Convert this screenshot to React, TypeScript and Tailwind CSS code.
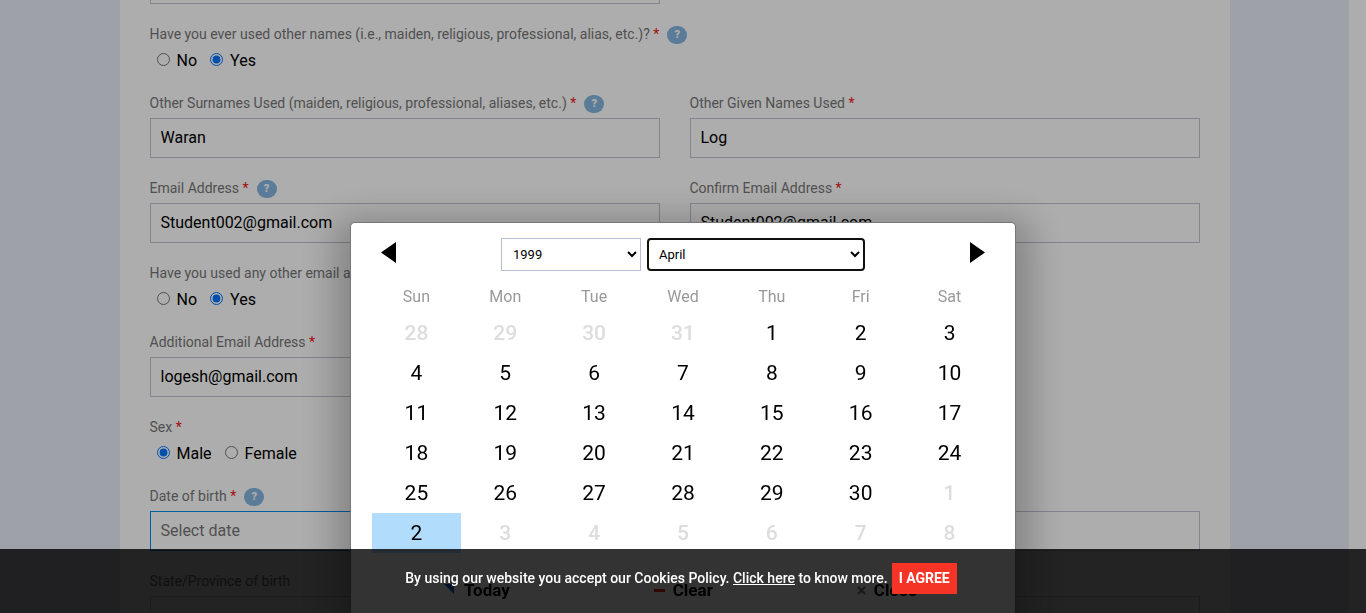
import { useState, type ReactNode } from 'react';

const YEARS = ['1997', '1998', '1999', '2000', '2001'];
const MONTHS = ['January', 'February', 'March', 'April', 'May', 'June', 'July', 'August', 'September', 'October', 'November', 'December'];
const WEEKDAYS = ['Sun', 'Mon', 'Tue', 'Wed', 'Thu', 'Fri', 'Sat'];

type Day = { n: number; outside: boolean; picked?: boolean };

const DAYS: Day[] = [
  ...[28, 29, 30, 31].map((n) => ({ n, outside: true })),
  ...Array.from({ length: 30 }, (_, i) => ({ n: i + 1, outside: false })),
  { n: 1, outside: true },
  { n: 2, outside: false, picked: true },
  ...[3, 4, 5, 6, 7, 8].map((n) => ({ n, outside: true })),
];

const WEEKS = Array.from({ length: 6 }, (_, w) => DAYS.slice(w * 7, w * 7 + 7));

function Help() {
  return (
    <button
      type="button"
      aria-label="Help"
      className="mt-px ml-2 flex h-[18px] w-5 items-center justify-center rounded-full bg-[#86b7e0] text-[11px] leading-none font-black text-white"
    >
      ?
    </button>
  );
}

function Star() {
  return <span className="text-[#f51414]"> *</span>;
}

type FieldProps = {
  id: string;
  label: string;
  value?: string;
  placeholder?: string;
  required?: boolean;
  help?: boolean;
  active?: boolean;
};

function Field({ id, label, value, placeholder, required, help, active }: FieldProps) {
  return (
    <div>
      <div className="flex h-5 items-center text-sm leading-5 whitespace-nowrap text-[#777]">
        <label htmlFor={id}>
          {label}
          {required && <Star />}
        </label>
        {help && <Help />}
      </div>
      <input
        id={id}
        type="text"
        defaultValue={value}
        placeholder={placeholder}
        className={`mt-[5px] block h-10 w-full border bg-white px-2.5 pb-0.5 text-base text-black placeholder:text-[#777] ${
          active ? 'border-[#0089ec]' : 'border-[#c1c4d0]'
        }`}
      />
    </div>
  );
}

type ChoiceProps = { name: string; label: string; options: string[]; chosen: string; help?: boolean };

function Choice({ name, label, options, chosen, help }: ChoiceProps) {
  return (
    <fieldset>
      <legend className="flex h-5 items-center text-sm leading-5 whitespace-nowrap text-[#777]">
        <span>
          {label}
          <Star />
        </span>
        {help && <Help />}
      </legend>
      <div className="mt-[5px] flex h-6 items-center gap-[13px] pl-[7px]">
        {options.map((option) => (
          <label key={option} className="flex items-center gap-[7px] text-base leading-6 text-black">
            <input type="radio" name={name} defaultChecked={option === chosen} className="mb-1 h-[13px] w-[13px]" />
            {option}
          </label>
        ))}
      </div>
    </fieldset>
  );
}

function Row({ children }: { children: ReactNode }) {
  return <div className="grid grid-cols-2 gap-[30px]">{children}</div>;
}

function Form() {
  return (
    <form className="mx-auto -mt-9 flex max-w-[1110px] flex-col gap-5 bg-white px-[30px] pb-5">
      <Row>
        <input type="text" aria-label="Surname" className="block h-10 w-full border border-[#c1c4d0] bg-white px-2.5" />
      </Row>
      <Choice
        name="other-names"
        label="Have you ever used other names (i.e., maiden, religious, professional, alias, etc.)?"
        options={['No', 'Yes']}
        chosen="Yes"
        help
      />
      <Row>
        <Field id="other-surnames" label="Other Surnames Used (maiden, religious, professional, aliases, etc.)" value="Waran" required help />
        <Field id="other-given" label="Other Given Names Used" value="Log" required />
      </Row>
      <Row>
        <Field id="email" label="Email Address" value="Student002@gmail.com" required help />
        <Field id="confirm-email" label="Confirm Email Address" value="Student002@gmail.com" required />
      </Row>
      <Choice name="other-email" label="Have you used any other email address?" options={['No', 'Yes']} chosen="Yes" />
      <Row>
        <Field id="additional-email" label="Additional Email Address" value="logesh@gmail.com" required />
      </Row>
      <Choice name="sex" label="Sex" options={['Male', 'Female']} chosen="Male" />
      <Row>
        <Field id="birth-date" label="Date of birth" placeholder="Select date" required help active />
        <Field id="birth-city" label="City of birth" />
      </Row>
      <Row>
        <Field id="birth-state" label="State/Province of birth" />
        <Field id="birth-country" label="Country of birth" />
      </Row>
    </form>
  );
}

function DatePicker() {
  const [year, setYear] = useState('1999');
  const [month, setMonth] = useState('April');

  return (
    <div className="fixed inset-0 flex items-end justify-center bg-black/[0.32]">
      <div
        role="dialog"
        aria-label="Choose a date"
        className="w-full max-w-[666px] rounded-t-[5px] border border-b-0 border-[#777] bg-white px-[21px] pt-[15px] shadow-[0_12px_36px_16px_rgba(0,0,0,0.24)]"
      >
        <div className="flex items-start justify-between px-[9px]">
          <button type="button" aria-label="Previous month" className="flex h-[29px] items-center">
            <svg width="15" height="21" viewBox="0 0 15 21">
              <path d="M15 0v21L0 10.5z" />
            </svg>
          </button>
          <div className="flex gap-1.5">
            <select
              aria-label="Year"
              value={year}
              onChange={(e) => setYear(e.target.value)}
              className="h-[33px] w-[140px] border border-[#b7c0d6] bg-white pl-[7px] text-[13px] text-black"
            >
              {YEARS.map((y) => (
                <option key={y}>{y}</option>
              ))}
            </select>
            <select
              aria-label="Month"
              value={month}
              onChange={(e) => setMonth(e.target.value)}
              className="h-[33px] w-[218px] rounded-[4px] border-2 border-[#101010] bg-white pl-1.5 text-[13px] text-black"
            >
              {MONTHS.map((m) => (
                <option key={m}>{m}</option>
              ))}
            </select>
          </div>
          <button type="button" aria-label="Next month" className="flex h-[29px] items-center">
            <svg width="15" height="21" viewBox="0 0 15 21">
              <path d="M0 0v21l15-10.5z" />
            </svg>
          </button>
        </div>

        <table className="mt-[10px] w-full table-fixed text-center">
          <thead>
            <tr className="h-8">
              {WEEKDAYS.map((d) => (
                <th key={d} scope="col" className="p-0 text-base leading-6 font-normal text-[#999]">
                  {d}
                </th>
              ))}
            </tr>
          </thead>
          <tbody>
            {WEEKS.map((week, w) => (
              <tr key={w} className="h-10">
                {week.map((day) => (
                  <td
                    key={day.n}
                    className={`p-0 text-[21px] leading-6 ${day.outside ? 'font-medium text-[#ddd]' : 'text-black'} ${
                      day.picked ? 'bg-[#b1dcfb]' : ''
                    }`}
                  >
                    {day.n}
                  </td>
                ))}
              </tr>
            ))}
          </tbody>
        </table>

        <div className="flex justify-between pt-[15px] pr-[77px] pl-[72px]">
          <button type="button" className="flex h-[45px] items-center gap-2.5 text-[17px] font-bold text-black">
            <svg width="10" height="10" viewBox="0 0 10 10" className="mb-1">
              <path d="M0 0h10v10z" fill="#0059bc" />
            </svg>
            Today
          </button>
          <button type="button" className="flex h-[45px] items-center gap-2 text-[17px] font-bold text-black">
            <span className="h-[3px] w-[11px] bg-[#ee2200]" />
            Clear
          </button>
          <button type="button" className="flex h-[45px] items-center gap-2 text-[17px] font-bold text-black">
            <svg width="9" height="9" viewBox="0 0 9 9" stroke="#777" strokeWidth="2">
              <path d="M1 1l7 7M8 1l-7 7" />
            </svg>
            Close
          </button>
        </div>
      </div>
    </div>
  );
}

function CookieBar() {
  return (
    <div className="fixed inset-x-0 bottom-0 flex items-center justify-center gap-1 bg-black/80 pt-3.5 pr-1 pb-[19px] text-sm font-medium text-white">
      <p className="pb-0.5">
        By using our website you accept our Cookies Policy.{' '}
        <a href="#cookies" className="underline">
          Click here
        </a>{' '}
        to know more.
      </p>
      <button type="button" className="h-[31px] bg-[#f53425] px-[7px] pb-px font-bold text-white">
        I AGREE
      </button>
    </div>
  );
}

export default function App() {
  return (
    <div className="flow-root h-screen overflow-hidden bg-white font-['Roboto',sans-serif]">
      <main className="mr-[17px] flow-root bg-[#eaeefa]">
        <Form />
      </main>
      <DatePicker />
      <CookieBar />
    </div>
  );
}
